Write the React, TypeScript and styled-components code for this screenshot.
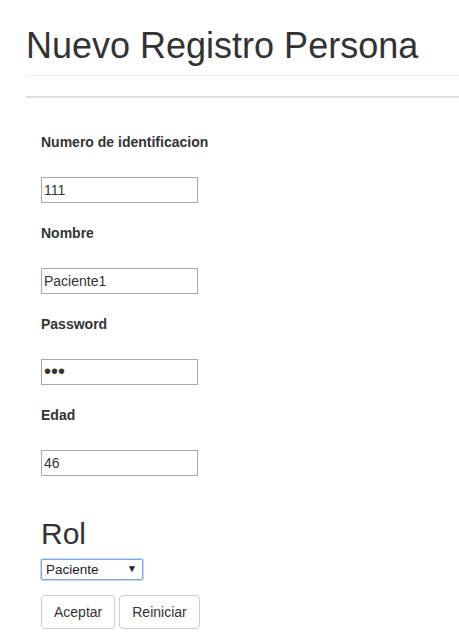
import React from "react";
import styled, { createGlobalStyle } from "styled-components";

const Global = createGlobalStyle`
  html, body { margin: 0; padding: 0; background: #fff; }
  body {
    font-family: "Liberation Sans", Arial, Helvetica, sans-serif;
    font-size: 14px;
    line-height: 1.42857;
    color: #333;
  }
  * { box-sizing: border-box; }
`;

const Page = styled.div`
  padding: 26px 0 0 26px;
`;

const PageHeader = styled.div`
  padding-bottom: 9px;
  border-bottom: 1px solid #eee;
`;

const Title = styled.h1`
  margin: 0;
  font-size: 36px;
  font-weight: 500;
  line-height: 1.1;
  color: #333;
`;

const Rule = styled.hr`
  margin: 20px 0 0 0;
  border: 0;
  border-top: 2px solid #ddd;
`;

const Form = styled.form`
  display: flex;
  flex-direction: column;
  padding: 34px 0 0 15px;
`;

const Group = styled.div`
  display: flex;
  flex-direction: column;
  align-items: flex-start;
  margin-bottom: 20px;
`;

const Label = styled.label`
  display: block;
  font-weight: bold;
  font-size: 14px;
  line-height: 20px;
  margin-bottom: 25px;
`;

const Input = styled.input<{ $secret?: boolean }>`
  width: 157px;
  height: 26px;
  padding: 1px 2px;
  border: 1px solid #a9a9a9;
  font-family: "Liberation Sans", Arial, sans-serif;
  font-size: ${(p) => (p.$secret ? "20px" : "14px")};
  color: #333;
  background: #fff;
  outline: none;
`;

const Subtitle = styled.h2`
  margin: 21px 0 9px 0;
  font-size: 30px;
  font-weight: 500;
  line-height: 33px;
  color: #333;
`;

const SelectWrap = styled.div`
  position: relative;
  width: 102px;
  height: 21px;
`;

const Select = styled.select`
  appearance: none;
  -webkit-appearance: none;
  width: 102px;
  height: 21px;
  padding: 0 0 0 4px;
  border: 1px solid #7fa6e8;
  box-shadow: 0 0 0 1px #c6d8f7;
  border-radius: 2px;
  background: #fff;
  font-family: "Liberation Sans", Arial, sans-serif;
  font-size: 13.5px;
  color: #222;
  outline: none;
`;

const Arrow = styled.span`
  position: absolute;
  right: 6px;
  top: 3px;
  font-size: 10px;
  line-height: 14px;
  color: #222;
  pointer-events: none;
`;

const Buttons = styled.div`
  display: flex;
  gap: 4px;
  margin-top: 15px;
`;

const Button = styled.button`
  padding: 6px 12px;
  font-family: "Liberation Sans", Arial, sans-serif;
  font-size: 14px;
  line-height: 20px;
  color: #333;
  background: #fff;
  border: 1px solid #ccc;
  border-radius: 4px;
  cursor: pointer;
`;

const fields = [
  { label: "Numero de identificacion", type: "text", value: "111" },
  { label: "Nombre", type: "text", value: "Paciente1" },
  { label: "Password", type: "password", value: "123" },
  { label: "Edad", type: "text", value: "46" },
];

export default function App() {
  return (
    <>
      <Global />
      <Page>
        <PageHeader>
          <Title>Nuevo Registro Persona</Title>
        </PageHeader>
        <Rule />
        <Form onSubmit={(e) => e.preventDefault()}>
          {fields.map((f) => (
            <Group key={f.label}>
              <Label>{f.label}</Label>
              <Input
                type={f.type}
                defaultValue={f.value}
                $secret={f.type === "password"}
              />
            </Group>
          ))}
          <Subtitle>Rol</Subtitle>
          <SelectWrap>
            <Select defaultValue="Paciente">
              <option>Paciente</option>
              <option>Medico</option>
            </Select>
            <Arrow>▼</Arrow>
          </SelectWrap>
          <Buttons>
            <Button type="submit">Aceptar</Button>
            <Button type="reset">Reiniciar</Button>
          </Buttons>
        </Form>
      </Page>
    </>
  );
}
